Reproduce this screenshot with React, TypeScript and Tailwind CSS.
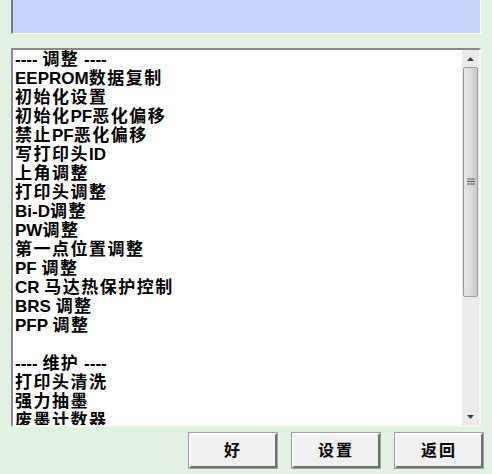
import React from "react";

const items = [
  "---- 调整 ----",
  "EEPROM数据复制",
  "初始化设置",
  "初始化PF恶化偏移",
  "禁止PF恶化偏移",
  "写打印头ID",
  "上角调整",
  "打印头调整",
  "Bi-D调整",
  "PW调整",
  "第一点位置调整",
  "PF 调整",
  "CR 马达热保护控制",
  "BRS 调整",
  "PFP 调整",
  "",
  "---- 维护 ----",
  "打印头清洗",
  "强力抽墨",
  "废墨计数器",
];

// split a label into latin and CJK runs so the CJK glyphs get their own spacing
const runs = (s: string) => s.match(/[\u4e00-\u9fff]+|[^\u4e00-\u9fff]+/g) ?? [];

const Label = ({ text }: { text: string }) => (
  <>
    {runs(text).map((r, i) =>
      /[\u4e00-\u9fff]/.test(r) ? (
        <span key={i} className="text-[17px] tracking-[1.5px]">{r}</span>
      ) : (
        <span key={i} className="text-[17px] whitespace-pre">{r}</span>
      )
    )}
  </>
);

const Button = ({ label }: { label: string }) => (
  <button className="w-[88px] h-[35px] bg-[#f0f0f0] border-2 border-t-white border-l-white border-r-[#6f6f6f] border-b-[#6f6f6f] outline outline-1 outline-[#a0a0a0] text-[16px] font-bold tracking-[2px] text-black flex items-center justify-center">
    {label}
  </button>
);

export default function App() {
  return (
    <div
      className="w-[492px] h-[474px] bg-[#e1f2e2] overflow-hidden flex flex-col px-[11px]"
      style={{ fontFamily: '"Liberation Sans", "Noto Sans CJK SC", sans-serif' }}
    >
      {/* top readout panel */}
      <div className="h-[34px] w-[470px] bg-[#c7d4fc] border-l-2 border-l-[#7a7a7a] border-r border-r-white border-b border-b-white" />

      {/* list box */}
      <div className="mt-[14px] w-[470px] h-[379px] bg-white border-2 border-t-[#8a8a8a] border-l-[#8a8a8a] border-r-[#f4f4f4] border-b-[#f4f4f4] flex">
        <div className="flex-1 overflow-hidden pl-[2px] font-bold text-black">
          {items.map((t, i) => (
            <div key={i} className="h-[19px] leading-[19px] whitespace-nowrap">
              <Label text={t} />
            </div>
          ))}
        </div>
        {/* scrollbar */}
        <div className="w-[17px] bg-[#ebebeb] flex flex-col">
          <div className="h-[17px] flex items-center justify-center">
            <svg width="7" height="4" viewBox="0 0 7 4">
              <path d="M0 4 L3.5 0 L7 4 Z" fill="#404040" />
            </svg>
          </div>
          <div className="h-[230px] mx-[1px] border border-[#9a9a9a] rounded-[2px] bg-gradient-to-r from-[#e6e6e6] via-[#dcdcdc] to-[#c9c9c9] flex items-center justify-center">
            <svg width="8" height="8" viewBox="0 0 8 8">
              <path d="M0 1h8M0 3.5h8M0 6h8" stroke="#555" strokeWidth="1" />
            </svg>
          </div>
          <div className="flex-1" />
          <div className="h-[17px] flex items-center justify-center">
            <svg width="7" height="4" viewBox="0 0 7 4">
              <path d="M0 0 L7 0 L3.5 4 Z" fill="#404040" />
            </svg>
          </div>
        </div>
      </div>

      {/* buttons */}
      <div className="mt-[6px] flex justify-end gap-[15px] pr-0 -mr-[2px]">
        <Button label="好" />
        <Button label="设置" />
        <Button label="返回" />
      </div>
    </div>
  );
}
